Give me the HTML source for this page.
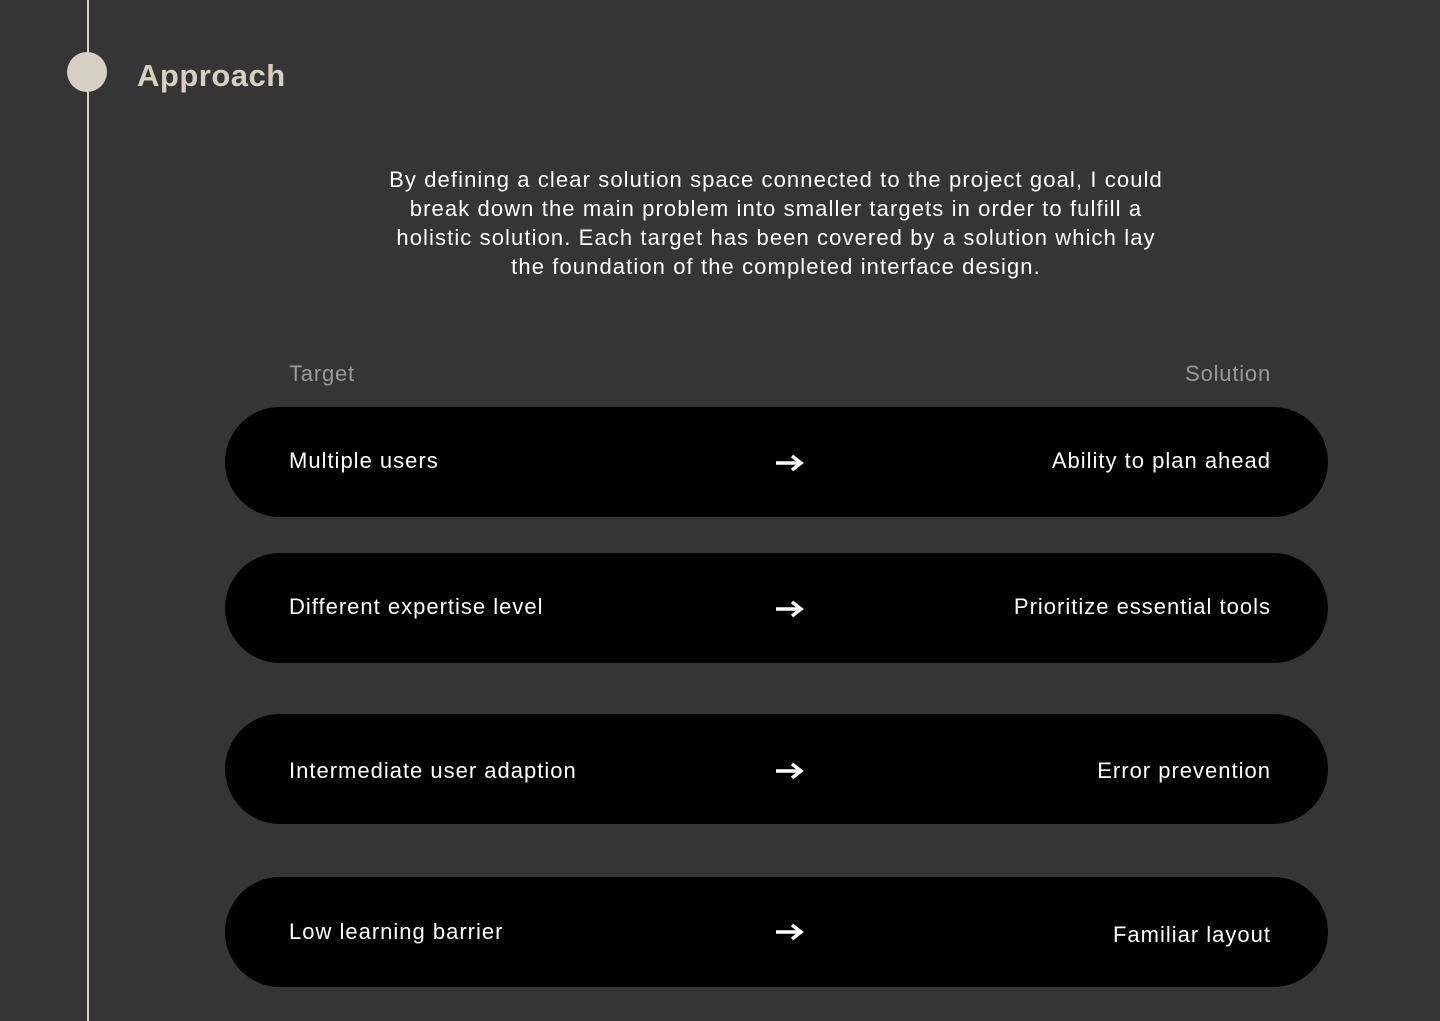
<!DOCTYPE html>
<html><head><style>
body{margin:0;width:1440px;height:1021px;background:#353535;position:relative;overflow:hidden;font-family:"Liberation Sans",sans-serif;}
.line{position:absolute;left:87px;top:0;width:2px;height:1021px;background:#d6d0c2;}
.dot{position:absolute;left:67px;top:52px;width:40px;height:40px;border-radius:50%;background:#d6d0c2;}
h1{position:absolute;left:137px;top:58px;margin:0;font-size:31px;font-weight:bold;color:#d6d0c2;letter-spacing:0.5px;}
.intro{position:absolute;left:300px;width:952px;top:165px;text-align:center;color:#fff;font-size:22px;line-height:29px;letter-spacing:1.1px;white-space:nowrap;}
.lab{position:absolute;top:361px;color:#9a9a9a;font-size:22px;letter-spacing:0.8px;}
.row{position:absolute;left:225px;width:1103px;height:110px;border-radius:55px;background:#000;color:#fff;font-size:22px;letter-spacing:1px;}
.row .l{position:absolute;left:64px;top:41px;}
.row .r{position:absolute;right:57px;top:41px;}
.row svg{position:absolute;left:551px;top:46px;}
</style></head><body>
<div class="line"></div><div class="dot"></div>
<h1>Approach</h1>
<div class="intro">By defining a clear solution space connected to the project goal, I could<br>break down the main problem into smaller targets in order to fulfill a<br>holistic solution. Each target has been covered by a solution which lay<br>the foundation of the completed interface design.</div>
<div class="lab" style="left:289px">Target</div>
<div class="lab" style="right:169px">Solution</div>
<div class="row" style="top:407px"><span class="l">Multiple users</span><svg width="30" height="20"><path d="M0 10H22M16 3L25 10L16 17" stroke="#fff" stroke-width="3.5" fill="none"/></svg><span class="r">Ability to plan ahead</span></div>
<div class="row" style="top:553px"><span class="l">Different expertise level</span><svg width="30" height="20"><path d="M0 10H22M16 3L25 10L16 17" stroke="#fff" stroke-width="3.5" fill="none"/></svg><span class="r">Prioritize essential tools</span></div>
<div class="row" style="top:714px"><span class="l" style="top:44px">Intermediate user adaption</span><svg width="30" height="20" style="top:47px"><path d="M0 10H22M16 3L25 10L16 17" stroke="#fff" stroke-width="3.5" fill="none"/></svg><span class="r" style="top:44px">Error prevention</span></div>
<div class="row" style="top:877px"><span class="l" style="top:42px">Low learning barrier</span><svg width="30" height="20" style="top:45px"><path d="M0 10H22M16 3L25 10L16 17" stroke="#fff" stroke-width="3.5" fill="none"/></svg><span class="r" style="top:45px">Familiar layout</span></div>
</body></html>
